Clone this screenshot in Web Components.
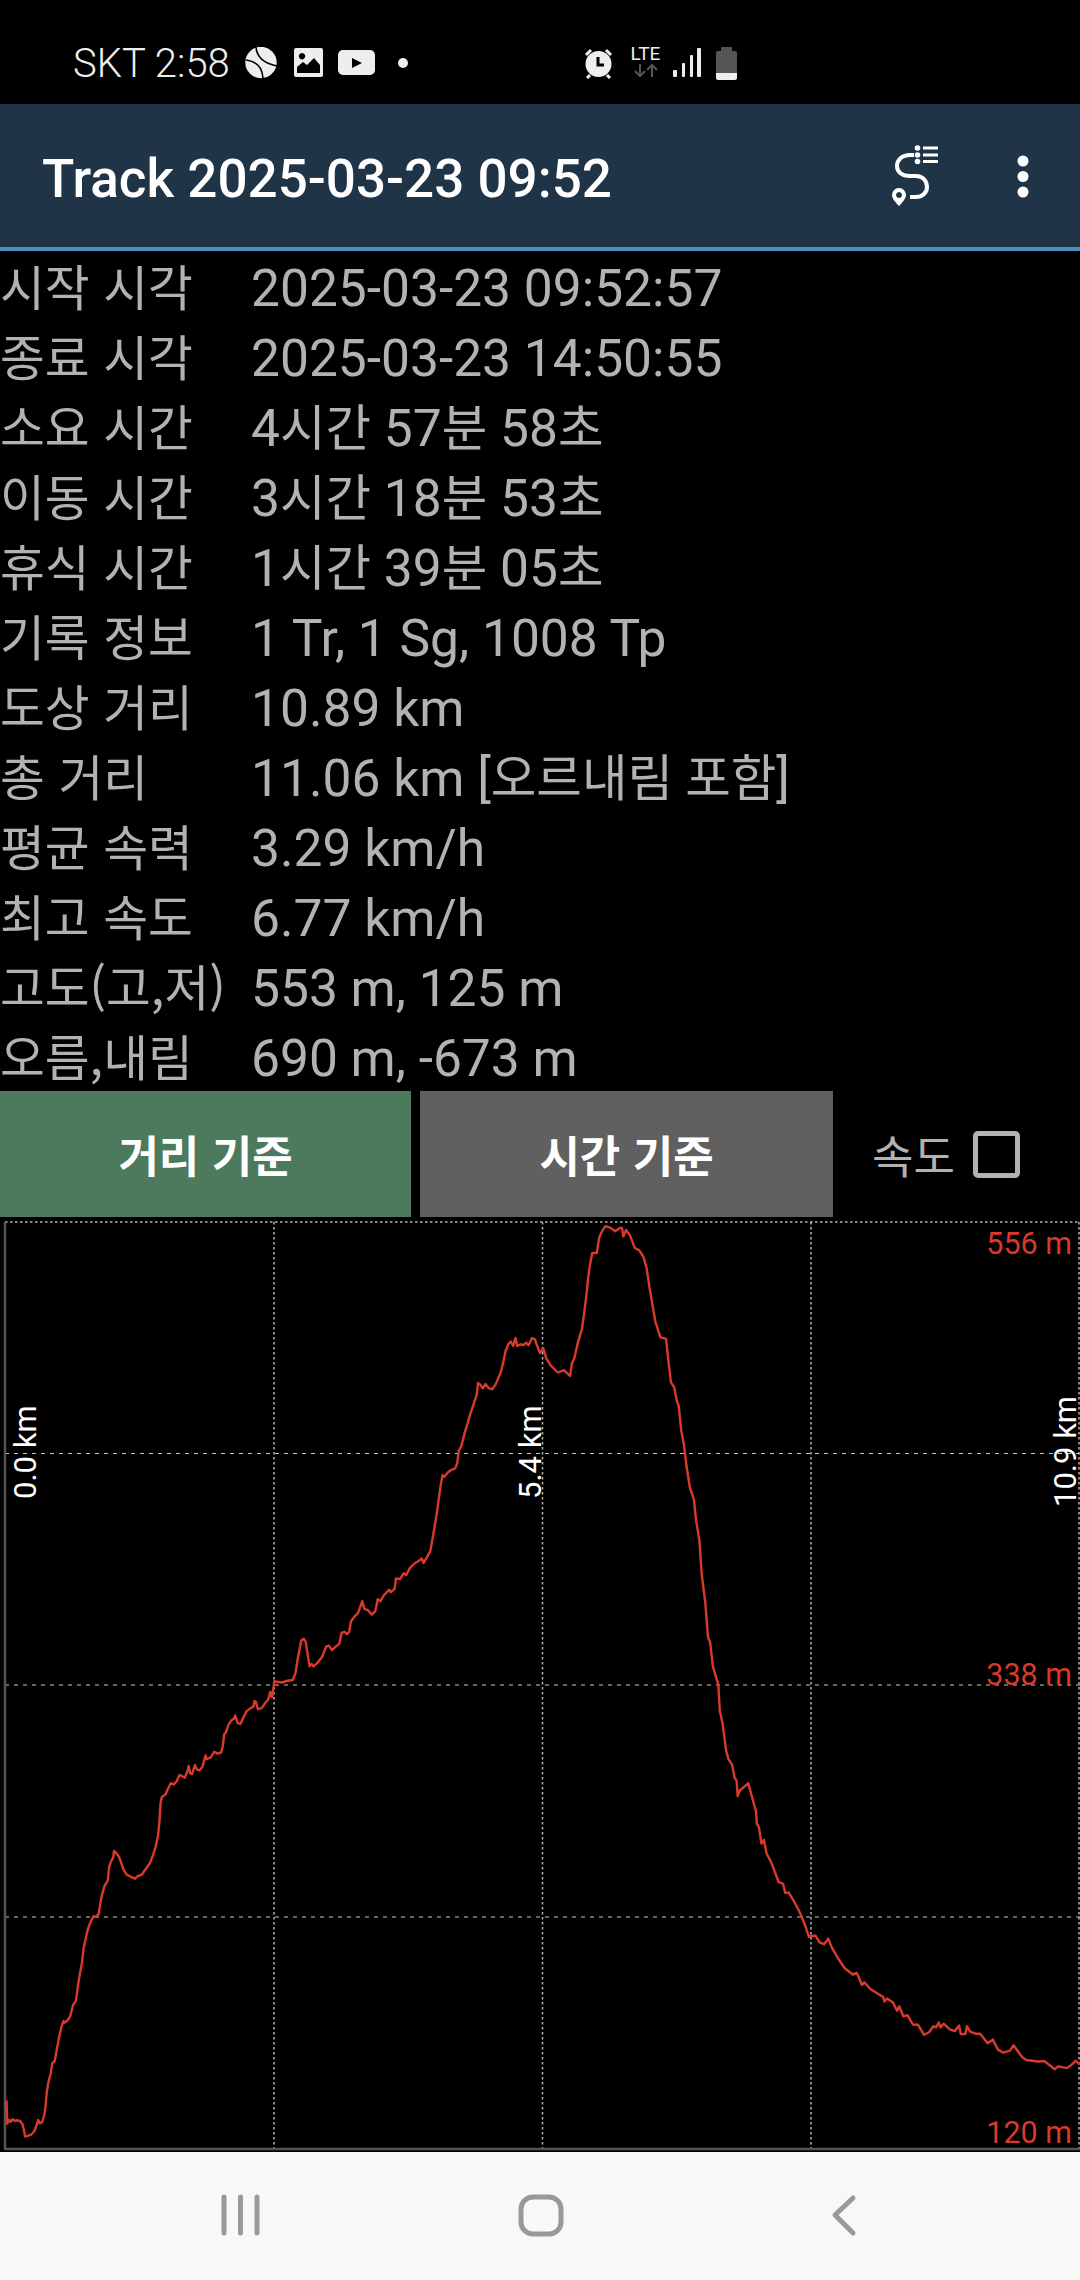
<!DOCTYPE html>
<html lang="ko">
<head>
<meta charset="utf-8">
<title>Track</title>
<style>
  html, body { margin: 0; padding: 0; background: #000; }
  body { width: 1080px; height: 2280px; overflow: hidden; display: flex; flex-direction: column; font-family: Roboto, "Noto Sans CJK KR", sans-serif; }
  elevation-chart { flex: 1; }
</style>
</head>
<body>
<status-bar></status-bar>
<track-header>Track 2025-03-23 09:52</track-header>
<track-stats>
  <stat-row label="시작 시각">2025-03-23 09:52:57</stat-row>
  <stat-row label="종료 시각">2025-03-23 14:50:55</stat-row>
  <stat-row label="소요 시간">4<span>시간</span> 57<span>분</span> 58<span>초</span></stat-row>
  <stat-row label="이동 시간">3<span>시간</span> 18<span>분</span> 53<span>초</span></stat-row>
  <stat-row label="휴식 시간">1<span>시간</span> 39<span>분</span> 05<span>초</span></stat-row>
  <stat-row label="기록 정보">1 Tr, 1 Sg, 1008 Tp</stat-row>
  <stat-row label="도상 거리">10.89 km</stat-row>
  <stat-row label="총 거리">11.06 km [<span>오르내림 포함</span>]</stat-row>
  <stat-row label="평균 속력">3.29 km/h</stat-row>
  <stat-row label="최고 속도">6.77 km/h</stat-row>
  <stat-row label="고도(고,저)">553 m, 125 m</stat-row>
  <stat-row label="오름,내림">690 m, -673 m</stat-row>
</track-stats>
<mode-bar>
  <mode-button color="#4c7a5c" width="411">거리 기준</mode-button>
  <mode-button color="#606060" width="413">시간 기준</mode-button>
  <speed-check>속도</speed-check>
</mode-bar>
<elevation-chart></elevation-chart>
<nav-bar></nav-bar>

<script>
class StatusBar extends HTMLElement {
    constructor() {
        super();
        this.attachShadow({mode: "open"});
    }

    connectedCallback() {
        this.shadowRoot.innerHTML = `
        <style>
          :host { display: block; height: 104px; background: #000; }
          .bar { display: flex; align-items: center; height: 100%; padding: 22px 0 0 73px; color: #eee; box-sizing: border-box; }
          .time { font: 300 40px Roboto, sans-serif; width: 172px; white-space: nowrap; }
          svg { display: block; fill: #eee; }
        </style>
        <div class="bar">
          <span class="time">SKT 2:58</span>
          <svg width="32" height="32" viewBox="245 48 32 32" style="margin-right:17px">
            <circle cx="261" cy="63.5" r="15.7"/>
            <path d="M256 48q1 15 21 19M246 61q16 2 17 18" fill="none" stroke="#000" stroke-width="1.6"/>
          </svg>
          <svg width="30" height="30" viewBox="294 49 30 30" style="margin-right:14px">
            <path fill-rule="evenodd" d="M296 49h25a2 2 0 0 1 2 2v25a2 2 0 0 1-2 2h-25a2 2 0 0 1-2-2v-25a2 2 0 0 1 2-2zM297 74h23v-8l-6-7-7 7-4-3-6 5zM302 54a3.200 3.200 0 1 0 .01 0z"/>
          </svg>
          <svg width="37" height="26" viewBox="337 51 37 26" style="margin-right:23px">
            <path fill-rule="evenodd" d="M342 51h27a5 5 0 0 1 5 5v15a5 5 0 0 1-5 5h-27a5 5 0 0 1-5-5v-15a5 5 0 0 1 5-5zM351 59v10l10-5z"/>
          </svg>
          <svg width="10" height="10" viewBox="397 58 10 10"><circle cx="402" cy="63" r="5"/></svg>
          <svg width="30" height="31" viewBox="583 48 30 31" style="margin-left:176px">
            <circle cx="597.500" cy="64" r="13"/>
            <path d="M585 55l5-5M610 55l-5-5M586 78l3-3M609 78l-3-3" stroke="#eee" stroke-width="3" fill="none"/>
            <path d="M597 57v8h6" stroke="#000" stroke-width="3" fill="none"/>
          </svg>
          <span style="margin-left:15px;width:33px;height:34px;display:flex;flex-direction:column;align-items:center;">
            <span style="font:400 19px/16px Roboto,sans-serif;letter-spacing:0">LTE</span>
            <svg width="24" height="15" viewBox="632 64 24 15" style="margin-top:1px">
              <path d="M638 65v12M633 72l5 5 5-5M650 78v-12M645 71l5-5 5 5" stroke="#555" stroke-width="2" fill="none"/>
            </svg>
          </span>
          <svg width="29" height="30" viewBox="672 48 29 30" style="margin-left:11px">
            <rect x="672" y="70" width="4" height="7" rx="1"/>
            <rect x="681" y="63" width="3" height="14" rx="1"/>
            <rect x="689" y="55" width="3" height="22" rx="1"/>
            <rect x="696" y="48" width="4" height="29" rx="1"/>
          </svg>
          <svg width="21" height="33" viewBox="715 47 21 33" style="margin-left:14px">
            <path d="M721 47h9a1 1 0 0 1 1 1v3h3a2 2 0 0 1 2 2v20h-21v-20a2 2 0 0 1 2-2h3v-3a1 1 0 0 1 1-1z" fill="#555"/>
            <path d="M715 73h21v5a2 2 0 0 1-2 2h-17a2 2 0 0 1-2-2z"/>
          </svg>
        </div>`;
    }
}

class TrackHeader extends HTMLElement {
    constructor() {
        super();
        this.attachShadow({mode: "open"});
    }

    connectedCallback() {
        this.shadowRoot.innerHTML = `
        <style>
          :host { display: block; height: 147px; box-sizing: border-box; background: #1f3446; border-bottom: 4px solid #4a8fbd; }
          .bar { display: flex; align-items: center; height: 100%; padding: 3px 0 0 42px; box-sizing: border-box; }
          .title { flex: 1; padding-top: 3px; font: 500 53px Roboto, sans-serif; color: #fff; }
          svg { display: block; }
        </style>
        <div class="bar">
          <span class="title"><slot></slot></span>
          <svg width="48" height="66" viewBox="892 146 48 66" style="margin-right:77px">
            <path d="M914 157h-4c-8 0-13 5-13 11s5 10 13 10h6c7 0 11 5 11 11s-5 10-11 10h-6" fill="none" stroke="#fff" stroke-width="4"/>
            <g fill="#fff">
              <circle cx="917.500" cy="150" r="2.800"/>
              <circle cx="917.500" cy="157" r="2.800"/>
              <circle cx="917.500" cy="163.500" r="2.800"/>
              <rect x="923" y="148.500" width="15" height="3"/>
              <rect x="923" y="155.500" width="15" height="3"/>
              <rect x="923" y="162" width="15" height="3"/>
              <path fill-rule="evenodd" d="M899 190a7 7 0 0 1 7 7c0 3-3 7-7 11-4-4-7-8-7-11a7 7 0 0 1 7-7zM899 194a3 3 0 1 0 .01 0z"/>
            </g>
          </svg>
          <svg width="12" height="46" viewBox="1017 155 12 46" style="margin-right:51px" fill="#fff">
            <circle cx="1023" cy="162" r="5.500"/>
            <circle cx="1023" cy="177.500" r="5.500"/>
            <circle cx="1023" cy="193" r="5.500"/>
          </svg>
        </div>`;
    }
}

class TrackStats extends HTMLElement {
    constructor() {
        super();
        this.attachShadow({mode: "open"}).innerHTML = `
        <style>
          :host { display: grid; grid-auto-rows: 70px; }
        </style>
        <slot></slot>`;
    }
}

class StatRow extends HTMLElement {
    constructor() {
        super();
        this.attachShadow({mode: "open"});
    }

    connectedCallback() {
        this.shadowRoot.innerHTML = `
        <style>
          :host { display: grid; grid-template-columns: 251px 1fr; align-items: start; color: #b2b2b2; white-space: nowrap; }
          .label { font: 400 48.700px/70px "Noto Sans CJK KR", sans-serif; margin-top: -1px; }
          .value { font: 400 51.500px/70px Roboto, "Noto Sans CJK KR", sans-serif; padding-top: 3px; }
          ::slotted(span) { font-size: 49.500px; }
        </style>
        <span class="label">${this.getAttribute("label")}</span>
        <span class="value"><slot></slot></span>`;
    }
}

class ModeBar extends HTMLElement {
    constructor() {
        super();
        this.attachShadow({mode: "open"}).innerHTML = `
        <style>
          :host { display: flex; height: 126px; gap: 9px; }
        </style>
        <slot></slot>`;
    }
}

class ModeButton extends HTMLElement {
    constructor() {
        super();
        this.attachShadow({mode: "open"});
    }

    connectedCallback() {
        this.shadowRoot.innerHTML = `
        <style>
          :host { display: flex; align-items: center; justify-content: center; width: ${this.getAttribute("width")}px; background: ${this.getAttribute("color")};
                  color: #fff; font: 700 44px "Noto Sans CJK KR", sans-serif; }
        </style>
        <slot></slot>`;
    }
}

class SpeedCheck extends HTMLElement {
    constructor() {
        super();
        this.attachShadow({mode: "open"}).innerHTML = `
        <style>
          :host { display: flex; align-items: center; padding-left: 30px; color: #b2b2b2; font: 400 45px "Noto Sans CJK KR", sans-serif; }
          .box { width: 47px; height: 47px; margin-left: 18px; box-sizing: border-box; border: 5px solid #b2b2b2; border-radius: 5px; }
        </style>
        <slot></slot><span class="box"></span>`;
    }
}

// profile traced from the track, one list per crop: [origin x, origin y, scale x, scale y, points]
const PROFILE = [
    [0, 1700, 2.904, 2.703, [19,1082,21,1145,27,1135,31,1140,37,1133,43,1138,48,1136,58,1138,65,1146,69,1160,73,1180,80,1178,90,1175,100,1165,106,1150,111,1135,116,1145,123,1140,130,1115,136,1060,140,1035,147,1010,152,982,159,975,165,945,172,910,178,885,184,868,188,872,197,865,204,855,212,825,221,812,226,775,232,740,238,710,243,670,250,640,255,620,264,598,272,584,278,586,287,578,292,545,298,520,304,502,313,488,317,450,322,437,329,425,331,408,338,414,346,424,352,440,358,457,368,472,380,478,392,483,400,476,412,472,425,455,436,440,444,420,452,398,459,365,463,330,466,280,470,262,481,255,488,240,496,225,505,228,514,218,521,203,529,206,537,210,545,190,548,178,552,198,558,200,566,176,572,188,580,190,588,180,597,150,600,160,612,155,622,140,632,145,642,142,647,125,651,92,656,88,663,68,672,55,680,50,683,42,690,62,698,65,708,45,716,30,728,22,736,18,739,3,743,5,749,25,760,22,770,8,778,0]],
    [0, 1210, 2.904, 2.904, [785,1400,790,1415,797,1368,805,1370,820,1372,835,1367,850,1365,858,1345,865,1300,875,1250,882,1245,888,1255,895,1300,899,1325,905,1318,910,1325,922,1315,935,1298,948,1267,955,1265,964,1278,975,1268,985,1260,992,1228,1000,1225,1008,1232,1014,1225,1019,1195,1030,1180,1040,1170,1052,1136,1058,1158,1068,1162,1080,1175,1090,1165,1097,1130,1105,1136,1115,1118,1130,1103,1135,1110,1146,1100,1150,1070,1162,1072,1172,1055,1180,1060,1190,1040,1205,1025,1212,1022,1225,1012,1230,1025,1240,1008,1250,990,1255,960,1262,920,1270,870,1278,810,1285,770,1290,775,1300,762,1310,755,1322,750,1328,735,1332,700,1340,685,1350,645,1358,620,1365,595,1375,565,1385,535,1388,502,1395,508,1402,518,1410,505,1420,518,1430,520,1440,505,1455,470,1462,440,1468,410,1476,390,1483,382,1490,395,1497,372,1502,395,1512,390,1520,392,1528,385,1535,393,1545,372,1553,375,1560,395,1568,415]],
    [540, 1210, 2.904, 2.904, [10,402,18,430,30,450,52,472,70,465,87,482,93,445,100,430,110,385,122,345,128,300,135,245,140,195,145,160,152,125,165,125,172,80,180,62,190,47,205,52,218,62,232,52,238,52,242,77,250,58,262,75,275,110,288,117,300,135,310,170,318,225,325,265,335,325,350,370,366,374,372,430,380,500,390,515,396,550,403,570,410,640,418,680,425,740,435,805,447,840,453,900,463,960,470,1060,480,1140,488,1240,494,1255,502,1325,518,1380,522,1455,530,1490]],
    [540, 1700, 2.904, 2.703, [540,135,547,160,558,175,565,210,571,218,574,260,580,245,605,225,615,260,627,300,630,335,636,345,643,388,650,378,658,415,672,440,693,492,706,497,712,522,722,520,735,540,755,575,770,610,781,640,790,637,800,637,812,655,825,660,837,645,848,670,865,698,885,725,908,742,920,738,935,770,942,763,960,782,997,803,1000,815,1008,807,1025,818,1037,840,1043,828,1055,855,1067,852,1083,877,1098,878,1115,905,1130,898,1142,882,1150,885,1158,872,1163,885,1172,875,1190,890,1205,895,1217,880,1222,903,1235,903,1240,882,1250,897,1265,902,1278,902,1300,928,1315,918,1330,945,1345,953,1365,948,1375,933,1400,965,1412,973,1445,977,1465,976,1495,998,1505,990,1530,995,1545,985,1555,975,1568,985]]
];

class ElevationChart extends HTMLElement {
    constructor() {
        super();
        this.attachShadow({mode: "open"});
    }

    profilePoints() {
        const out = [];
        for (const [ox, oy, sx, sy, pts] of PROFILE) {
            for (let i = 0; i < pts.length; i += 2) {
                out.push((ox + pts[i] / sx).toFixed(1) + "," + (oy + pts[i + 1] / sy).toFixed(1));
            }
        }
        return out.join(" ");
    }

    connectedCallback() {
        const ys = [1453.5, 1685, 1917];
        const xs = [274, 542.5, 811, 1079];
        this.shadowRoot.innerHTML = `
        <style>
          :host { display: block; background: #000; }
          svg { display: block; width: 100%; height: 100%; }
          text { font-family: Roboto, sans-serif; }
          .km { fill: #fff; font-weight: 400; font-size: 31px; }
          .alt { fill: #d8392b; text-anchor: end; font-size: 30.500px; }
        </style>
        <svg viewBox="0 1217 1080 935">
          <line x1="5" x2="1080" y1="1222" y2="1222" stroke="#b4b4b4" stroke-width="1.500" stroke-dasharray="2.500 2.500"/>
          ${ys.map(y => `<line x1="5" x2="1080" y1="${y}" y2="${y}" stroke="#c8c8c8" stroke-width="1.200" stroke-dasharray="4 5"/>`).join("")}
          ${xs.map(x => `<line x1="${x}" x2="${x}" y1="1222" y2="2149" stroke="#b4b4b4" stroke-width="1.500" stroke-dasharray="2.500 2.500"/>`).join("")}
          <path d="M5 1222V2149H1080" fill="none" stroke="#555" stroke-width="2.500"/>
          <polyline points="${this.profilePoints()}" fill="none" stroke="#d93a2c" stroke-width="2.400" stroke-linejoin="round"/>
          <text class="alt" x="1072" y="1254">556 m</text>
          <text class="alt" x="1072" y="1685">338 m</text>
          <text class="alt" x="1072" y="2143">120 m</text>
          <text class="km" transform="translate(36 1499) rotate(-90)">0.0 km</text>
          <text class="km" transform="translate(541 1499) rotate(-90)">5.4 km</text>
          <text class="km" transform="translate(1076 1507) rotate(-90)">10.9 km</text>
        </svg>`;
    }
}

class NavBar extends HTMLElement {
    constructor() {
        super();
        this.attachShadow({mode: "open"}).innerHTML = `
        <style>
          :host { display: block; height: 128px; background: #f8f8f8; }
          .bar { display: flex; align-items: center; height: 100%; padding-left: 220px; box-sizing: border-box; }
          svg { display: block; fill: none; stroke: #999; stroke-width: 5; stroke-linecap: round; stroke-linejoin: round; }
        </style>
        <div class="bar">
          <svg width="42" height="44" viewBox="219 2194 42 44">
            <path d="M223 2197v36M239.500 2197v36M256 2197v36"/>
          </svg>
          <svg width="46" height="44" viewBox="519 2194 46 44" style="margin-left:256px">
            <rect x="522" y="2197" width="40" height="37" rx="12"/>
          </svg>
          <svg width="30" height="44" viewBox="830 2194 30 44" style="margin-left:265px">
            <path d="M854 2198l-18 17 18 18"/>
          </svg>
        </div>`;
    }
}

customElements.define("status-bar", StatusBar);
customElements.define("track-header", TrackHeader);
customElements.define("track-stats", TrackStats);
customElements.define("stat-row", StatRow);
customElements.define("mode-bar", ModeBar);
customElements.define("mode-button", ModeButton);
customElements.define("speed-check", SpeedCheck);
customElements.define("elevation-chart", ElevationChart);
customElements.define("nav-bar", NavBar);
</script>
</body>
</html>
